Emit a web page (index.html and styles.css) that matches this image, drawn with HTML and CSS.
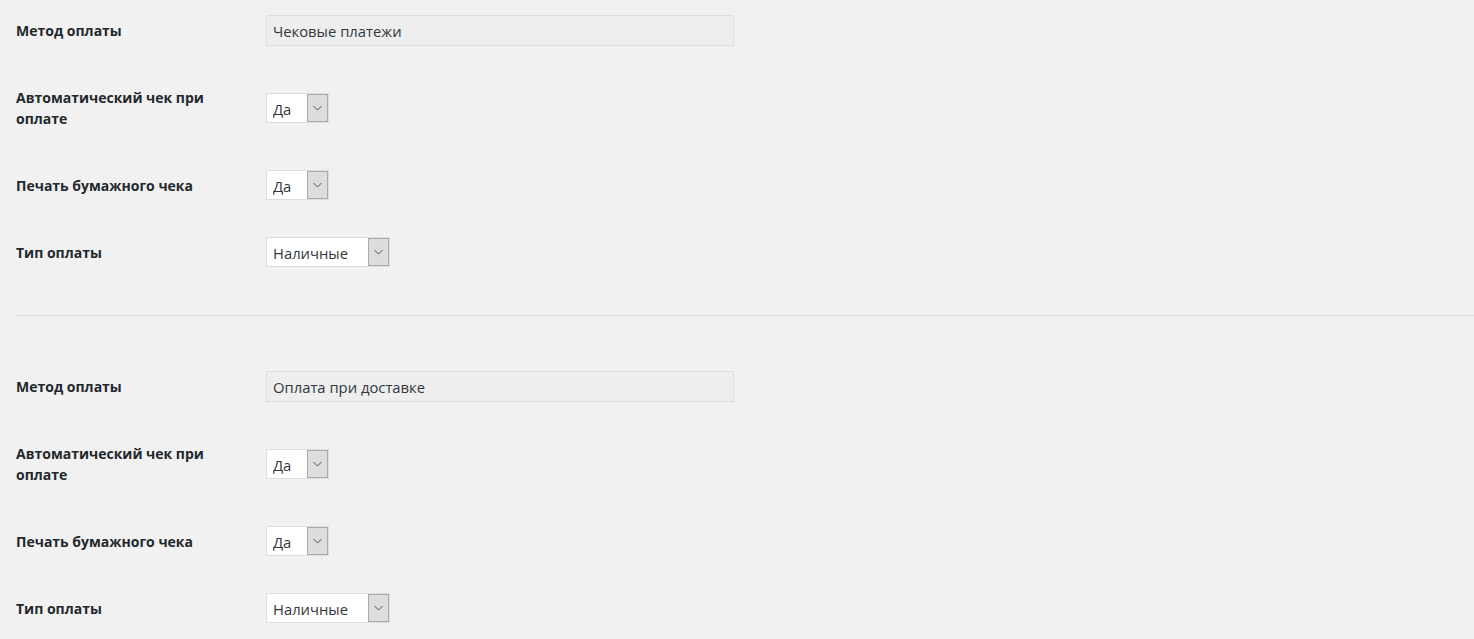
FILE: index.html
```html
<html>
  <head>
    <link rel="stylesheet" href="styles.css">
    <title>Настройки чеков</title>
  </head>
  <body>
    <div class="section">
      <div class="row spaced">
        <label class="label">Метод оплаты</label>
        <input class="field" type="text" value="Чековые платежи" readonly>
      </div>
      <div class="row spaced">
        <label class="label">Автоматический чек при оплате</label>
        <div class="select short">
          <select><option>Да</option><option>Нет</option></select>
          <span class="arrow"><svg width="9" height="6" viewBox="0 0 9 6"><path d="M0.5 1l4 4 4-4" fill="none" stroke="#555" stroke-width="1"/></svg></span>
        </div>
      </div>
      <div class="row">
        <label class="label">Печать бумажного чека</label>
        <div class="select short">
          <select><option>Да</option><option>Нет</option></select>
          <span class="arrow"><svg width="9" height="6" viewBox="0 0 9 6"><path d="M0.5 1l4 4 4-4" fill="none" stroke="#555" stroke-width="1"/></svg></span>
        </div>
      </div>
      <div class="row">
        <label class="label">Тип оплаты</label>
        <div class="select wide">
          <select><option>Наличные</option><option>Безналичные</option></select>
          <span class="arrow"><svg width="9" height="6" viewBox="0 0 9 6"><path d="M0.5 1l4 4 4-4" fill="none" stroke="#555" stroke-width="1"/></svg></span>
        </div>
      </div>
    </div>

    <hr class="divider">

    <div class="section">
      <div class="row spaced">
        <label class="label">Метод оплаты</label>
        <input class="field" type="text" value="Оплата при доставке" readonly>
      </div>
      <div class="row spaced">
        <label class="label">Автоматический чек при оплате</label>
        <div class="select short">
          <select><option>Да</option><option>Нет</option></select>
          <span class="arrow"><svg width="9" height="6" viewBox="0 0 9 6"><path d="M0.5 1l4 4 4-4" fill="none" stroke="#555" stroke-width="1"/></svg></span>
        </div>
      </div>
      <div class="row">
        <label class="label">Печать бумажного чека</label>
        <div class="select short">
          <select><option>Да</option><option>Нет</option></select>
          <span class="arrow"><svg width="9" height="6" viewBox="0 0 9 6"><path d="M0.5 1l4 4 4-4" fill="none" stroke="#555" stroke-width="1"/></svg></span>
        </div>
      </div>
      <div class="row">
        <label class="label">Тип оплаты</label>
        <div class="select wide">
          <select><option>Наличные</option><option>Безналичные</option></select>
          <span class="arrow"><svg width="9" height="6" viewBox="0 0 9 6"><path d="M0.5 1l4 4 4-4" fill="none" stroke="#555" stroke-width="1"/></svg></span>
        </div>
      </div>
    </div>
  </body>
</html>
```

FILE: styles.css
```css
body {
  margin: 0;
  padding-left: 16px;
  background: #f1f1f1;
  font-family: "Open Sans", "Noto Sans", sans-serif;
  font-size: 14px;
  color: #23282d;
}

.section {
  display: flex;
  flex-direction: column;
}

.row {
  display: flex;
  align-items: center;
  padding: 15px 0 22px;
}

.row.spaced {
  padding-bottom: 26px;
}

.label {
  width: 200px;
  margin-right: 50px;
  font-weight: 700;
  line-height: 21px;
}

.field {
  box-sizing: border-box;
  width: 468px;
  height: 31px;
  margin: 0;
  padding: 1px 6px 0;
  border: 1px solid #ddd;
  background: #eee;
  font-family: inherit;
  font-size: 14.8px;
  color: #32373c;
  outline: none;
}

.select {
  box-sizing: border-box;
  display: flex;
  height: 30px;
  border: 1px solid #ddd;
  background: #fff;
}

.select.short {
  width: 63px;
}

.select.wide {
  width: 124px;
}

.select select {
  flex: 1;
  min-width: 0;
  margin: 0;
  padding: 1px 0 0 6px;
  border: 0;
  background: transparent;
  appearance: none;
  -webkit-appearance: none;
  font-family: inherit;
  font-size: 14.8px;
  color: #32373c;
  outline: none;
}

.arrow {
  box-sizing: border-box;
  width: 21px;
  display: flex;
  align-items: center;
  justify-content: center;
  border: 1px solid #aaa;
  background: #ddd;
}

.divider {
  margin: 26px 0 40px;
  border: 0;
  border-top: 1px solid #ddd;
  height: 0;
}
```
